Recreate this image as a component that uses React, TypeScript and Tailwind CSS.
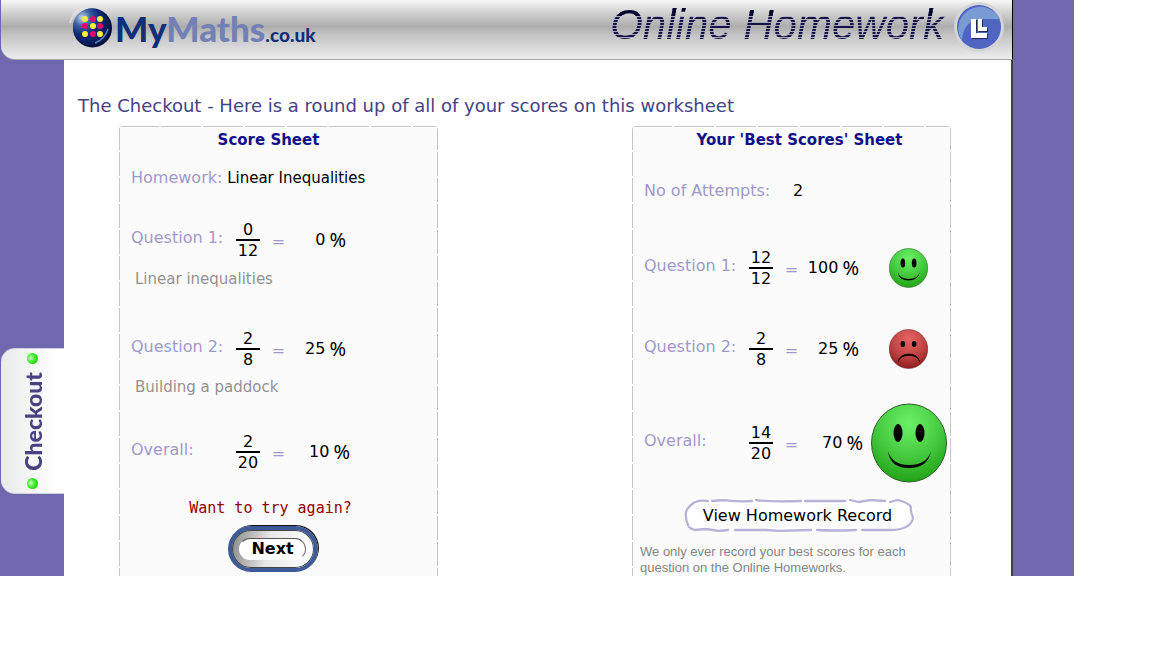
import type { ReactNode } from "react";

function GlobeLogo() {
  const dots = [
    [85, 19, "y"], [93, 19, "p"], [100, 19, "y"],
    [85, 26, "p"], [93, 26, "y"], [100, 26, "p"],
    [85, 34, "y"], [93, 34, "p"], [100, 34, "y"],
  ] as const;
  return (
    <svg className="h-[42px] w-[44px] shrink-0" viewBox="68 6 44 42" aria-hidden="true">
      <defs>
        <radialGradient id="globe" cx="0.25" cy="0.25" r="0.75">
          <stop offset="0" stopColor="#c5d6ee" />
          <stop offset="0.3" stopColor="#3c62a6" />
          <stop offset="0.6" stopColor="#0d2d7c" />
          <stop offset="1" stopColor="#071b55" />
        </radialGradient>
      </defs>
      <path d="M70 23 A22 20 0 0 1 84 8" stroke="#e6e6e6" strokeOpacity="0.7" strokeWidth="2" fill="none" />
      <circle cx="92.500" cy="28" r="19.500" fill="#050f35" />
      <circle cx="91.500" cy="27" r="18.500" fill="url(#globe)" />
      <path d="M95 43 Q105 39 108 29" stroke="#5f83bd" strokeWidth="1.500" fill="none" />
      {dots.map(([x, y, c]) => (
        <circle key={`${x}-${y}`} cx={x} cy={y} r="3" fill={c === "y" ? "#fbee3f" : "#dc0a6b"} />
      ))}
    </svg>
  );
}

function ClockLogo() {
  return (
    <svg className="size-[50px] shrink-0" viewBox="0 0 50 50" aria-hidden="true">
      <circle cx="25" cy="25" r="25" fill="#d5d5d8" />
      <circle cx="25" cy="25" r="22" fill="#5065c2" />
      <path d="M8 39 A22 22 0 1 1 46 17 L28 17 Q9 18 8 39Z" fill="#789bd6" />
      <path d="M17 17h5v14h11v5H17z M24 17h4v8h5v4h-9z" fill="#222b60" transform="translate(1 1)" />
      <path d="M17 17h5v14h11v5H17z M24 17h4v8h5v4h-9z" fill="#fff" />
    </svg>
  );
}

function Face({ mood, big = false }: { mood: "happy" | "sad"; big?: boolean }) {
  const happy = mood === "happy";
  const id = `face-${mood}-${big ? "big" : "small"}`;
  return (
    <svg
      className={big ? "h-[80px] w-[76px]" : "h-[40px] w-[39px]"}
      viewBox="0 0 76 80"
      preserveAspectRatio="none"
      role="img"
      aria-label={happy ? "Happy face" : "Sad face"}
    >
      <defs>
        <radialGradient id={id} cx="0.5" cy="0.25" r="0.75">
          <stop offset="0" stopColor={happy ? "#6bf168" : "#e56464"} />
          <stop offset="0.6" stopColor={happy ? "#43c73d" : "#c04343"} />
          <stop offset="1" stopColor={happy ? "#22a317" : "#8f1d1d"} />
        </radialGradient>
      </defs>
      <ellipse cx="38" cy="40" rx="37.500" ry="39" fill={`url(#${id})`} stroke={happy ? "#2d5c2a" : "#5b2424"} strokeWidth="1" />
      <ellipse cx="27" cy="30" rx="4.500" ry={happy ? 9 : 6} />
      <ellipse cx="49" cy="30" rx="4.500" ry={happy ? 9 : 6} />
      {happy ? (
        <path d="M17 48 Q21 62 38 62 Q56 62 60 48 Q57 65 38 65 Q19 65 17 48Z" />
      ) : (
        <path d="M18 66 Q21 53 39 53 Q56 53 60 66 Q56 50 39 50 Q20 50 18 66Z" stroke="#000" />
      )}
    </svg>
  );
}

function ScoreRow({
  label, top, bottom, percent, overall = false, children,
}: {
  label: string; top: number; bottom: number; percent: number; overall?: boolean; children?: ReactNode;
}) {
  return (
    <div className="flex items-center pl-3">
      <span className="w-[105px] shrink-0 pb-1 text-[#9f99cb]">{label}</span>
      <span className="flex w-6 shrink-0 flex-col text-center leading-[19px] text-black">
        <span>{top}</span>
        <span className="h-[2px] bg-black" />
        <span>{bottom}</span>
      </span>
      <span className="w-[37px] shrink-0 pt-1 text-center text-[#9f99cb]">=</span>
      <span className={overall ? "flex w-[53px] shrink-0 items-center justify-end gap-1 text-black" : "flex w-[49px] shrink-0 items-center justify-end gap-1 text-black"}>
        <span>{percent}</span>
        <span className="font-['Noto_Sans',sans-serif] text-xl leading-5">%</span>
      </span>
      {children}
    </div>
  );
}

function Sheet({ children }: { children: ReactNode }) {
  return (
    <section className="w-[319px] shrink-0 rounded-t-sm bg-[#fbfbfb] bg-[linear-gradient(90deg,#c6c6c6_96%,transparent_96%),linear-gradient(#c6c6c6_93%,transparent_93%),linear-gradient(#c6c6c6_93%,transparent_93%)] bg-[size:42px_1px,1px_26px,1px_26px] bg-[position:0_0,0_0,100%_0] [background-repeat:repeat-x,repeat-y,repeat-y] pt-[2px] text-base leading-6">
      {children}
    </section>
  );
}

function GreenLamp() {
  return <span className="size-[11px] rounded-full bg-[radial-gradient(circle_at_35%_45%,#d4ffc9_0%,#36ee20_45%,#16b90b_100%)]" />;
}

export default function App() {
  return (
    <div className="mr-[78px] bg-[#7068ae] font-['DejaVu_Sans',Verdana,sans-serif]">
      <header className="mr-[61px] ml-px flex h-[60px] items-start justify-between rounded-bl-[14px] border-r border-b border-r-black border-b-[#a6a6ac] bg-[linear-gradient(#f7f7f7_0%,#d0d0d0_22%,#adadad_45%,#c4c4c4_60%,#ededed_100%)] pr-2 pl-[67px]">
        <a href="#home" aria-label="MyMaths.co.uk" className="flex items-start pt-[6px]">
          <GlobeLogo />
          <span className="pl-[3px] font-[Lato,sans-serif] text-[35px] leading-[44px] font-black text-[#0f2f7b]">
            My<span className="text-[#7380b4]">Maths</span>
            <span className="text-[19px] leading-none">.co.uk</span>
          </span>
        </a>
        <div className="flex items-start gap-[6px] pt-[2px]">
          <h1 className="bg-[linear-gradient(#04042e_0,#04042e_14px,transparent_14px),repeating-linear-gradient(#151246_0px,#151246_2px,#a9a8bd_2px,#a9a8bd_3px)] bg-clip-text pr-1 font-['Liberation_Sans',Arial,sans-serif] text-[42px] leading-[46px] text-transparent italic">
            Online Homework
          </h1>
          <ClockLogo />
        </div>
      </header>

      <div className="flex">
        <aside className="flex w-16 shrink-0 flex-col pt-[288px] pl-px">
          <a href="#checkout" className="flex h-[146px] flex-col items-center justify-between rounded-l-[14px] border-y border-[#cfcfe0] bg-[linear-gradient(90deg,#e9ebea,#ffffff_90%)] py-1">
            <GreenLamp />
            <span className="rotate-180 font-[Lato,sans-serif] text-[23px] leading-7 font-black text-[#474383] [writing-mode:vertical-rl]">Checkout</span>
            <GreenLamp />
          </a>
        </aside>

        <main className="min-w-0 flex-1 border-r-2 border-[#403c60] bg-white pt-[34px]">
          <h2 className="pl-[14px] text-lg leading-6 whitespace-nowrap text-[#474383]">
            The Checkout - Here is a round up of all of your scores on this worksheet
          </h2>
          <div className="mt-2 flex justify-between pr-[60px] pl-[55px]">
            <Sheet>
              <h3 className="pr-5 text-center text-[15px] font-bold text-[#10108c]">Score Sheet</h3>
              <p className="mt-[14px] pl-3 text-[15px] text-black">
                <span className="text-base text-[#9f99cb]">Homework:</span> Linear Inequalities
              </p>
              <div className="mt-[30px]">
                <ScoreRow label="Question 1:" top={0} bottom={12} percent={0} />
              </div>
              <p className="mt-[7px] pl-4 text-[15px] text-[#929292]">Linear inequalities</p>
              <div className="mt-[38px]">
                <ScoreRow label="Question 2:" top={2} bottom={8} percent={25} />
              </div>
              <p className="mt-[6px] pl-4 text-[15px] text-[#929292]">Building a paddock</p>
              <div className="mt-[33px]">
                <ScoreRow label="Overall:" top={2} bottom={20} percent={10} overall />
              </div>
              <div className="mt-6 flex flex-col items-center pr-3 pb-1">
                <p className="pr-1 font-['DejaVu_Sans_Mono',monospace] text-[15px] text-[#930000]">Want to try again?</p>
                <button
                  type="button"
                  className="mt-[6px] flex h-[46px] w-[90px] items-center justify-center rounded-full border-4 border-[#3e5a97] bg-[linear-gradient(100deg,#888888,#e8e8e8_45%,#ffffff)] shadow-[inset_0_0_0_1px_#444444,1px_-1px_0_#111111]"
                >
                  <span className="rounded-full border border-transparent border-t-[#555555] border-r-[#777777] bg-white px-[11px] leading-5 font-bold text-black">Next</span>
                </button>
              </div>
            </Sheet>

            <Sheet>
              <h3 className="pl-4 text-center text-[15px] font-bold text-[#10108c]">Your 'Best Scores' Sheet</h3>
              <p className="mt-[27px] flex pl-3 text-[#9f99cb]">
                <span className="w-[149px]">No of Attempts:</span>
                <span className="text-black">2</span>
              </p>
              <div className="mt-[45px]">
                <ScoreRow label="Question 1:" top={12} bottom={12} percent={100}>
                  <span className="pl-[30px]"><Face mood="happy" /></span>
                </ScoreRow>
              </div>
              <div className="mt-[41px]">
                <ScoreRow label="Question 2:" top={2} bottom={8} percent={25}>
                  <span className="pl-[30px]"><Face mood="sad" /></span>
                </ScoreRow>
              </div>
              <div className="mt-[34px]">
                <ScoreRow label="Overall:" top={14} bottom={20} percent={70} overall>
                  <span className="pl-2"><Face mood="happy" big /></span>
                </ScoreRow>
              </div>
              <div className="mt-4 flex justify-center pl-4">
                <button type="button" className="relative h-[33px] w-[231px] rounded-full bg-white pr-1 leading-6 text-black">
                  <svg className="absolute inset-0 size-full" viewBox="0 0 231 33" fill="none" stroke="#b6b2d8" strokeWidth="2.300" strokeLinecap="round" aria-hidden="true">
                    <path d="M4 26 Q1 19 2 13 Q4 7 11 3 Q16 1 24 2 M28 2 L40 1 Q55 3 68 2 M72 1 Q85 3 117 2 M121 2 H161 M166 1 L175 3 L186 1 L201 2 M206 3 L214 1 Q225 4 227 8 Q226 12 229 18 Q229 24 222 28 Q216 31 207 31 H178 M172 31 Q150 32 133 31 M127 31 L95 32 L82 31 H51 M44 31 L35 32 L22 30 L11 31 Q7 30 5 28" />
                  </svg>
                  View Homework Record
                </button>
              </div>
              <p className="mt-3 pr-8 pl-2 font-['Liberation_Sans',Arial,sans-serif] text-[13px] leading-4 text-[#858585]">
                We only ever record your best scores for each question on the Online Homeworks.
              </p>
            </Sheet>
          </div>
        </main>
        <div className="w-[61px] shrink-0" />
      </div>
    </div>
  );
}
